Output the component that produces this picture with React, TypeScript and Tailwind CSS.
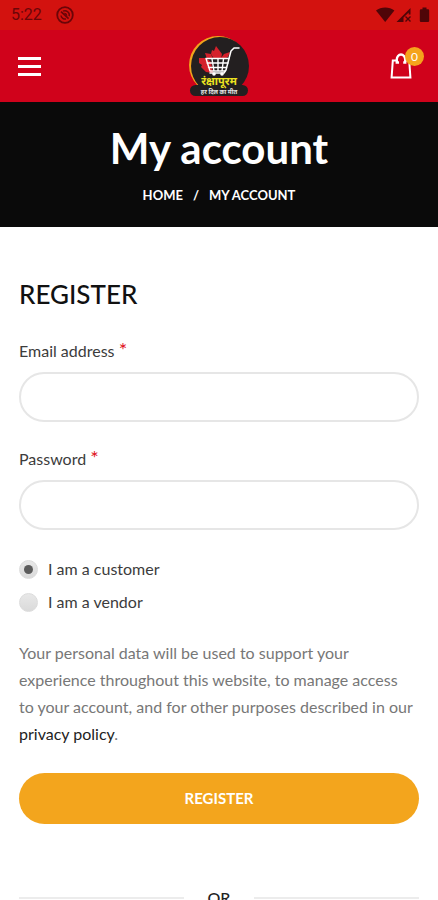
import { useState } from "react";

const roles = [
  { value: "customer", label: "I am a customer" },
  { value: "vendor", label: "I am a vendor" },
];

function StatusBar() {
  return (
    <div className="flex h-[30px] items-center justify-between bg-[#d3120f] pr-2 pl-[11px] text-[#6b0508]">
      <div className="flex items-center gap-[14px]">
        <span className="font-[Roboto,sans-serif] text-base">5:22</span>
        <svg className="size-[18px]" viewBox="0 0 18 18" fill="none" stroke="currentColor">
          <circle cx="9" cy="9" r="7.8" strokeWidth="1.8" />
          <path d="M5 9.500a4.200 4.200 0 0 0 5 3.500M7 5.200a4.400 4.400 0 0 1 6.200 5" strokeWidth="1.500" />
          <path d="M5 5.600l7.600 7" strokeWidth="1.700" />
          <path d="M8.500 7.300a2.300 2.300 0 0 1 2.400 2.300z" fill="currentColor" strokeWidth="1" />
        </svg>
      </div>
      <svg className="h-4 w-[54px] text-[#4f0508]" viewBox="0 0 54 16" fill="currentColor">
        <path d="M0 3.600C5-.6 13.400-.6 18.400 3.600L9.200 15z" />
        <path d="M20.500 15L34.500 1v6.500h-1.800V5.400L27.500 10.600V15z" />
        <path d="M29.500 9.500l5 5m0-5l-5 5" stroke="currentColor" strokeWidth="1.400" />
        <path d="M46.500.5h4v1.800h1.500a1.200 1.200 0 0 1 1.200 1.200v10.300a1.200 1.200 0 0 1-1.200 1.200h-7a1.200 1.200 0 0 1-1.200-1.200V3.500A1.200 1.200 0 0 1 45 2.300h1.500z" />
      </svg>
    </div>
  );
}

function Logo() {
  return (
    <svg className="h-[62px] w-[60px]" viewBox="0 0 60 62" role="img" aria-label="Store logo">
      <circle cx="29" cy="30" r="29" fill="#f0a41c" />
      <circle cx="31" cy="31" r="29" fill="#231f20" />
      <path d="M8 50l-4 2v5h8z" fill="#231f20" />
      <rect x="1" y="50" width="58" height="11" rx="5.500" fill="#231f20" />
      <g fill="#d4202b">
        <path d="M27 11l3 4 3 4-1 5h-7l-3-5 1-4 2 1z" />
        <path d="M10 23l7 0 5 4 2 11-7-1-5-5 1-2-3-2z" />
        <path d="M16 18l6 1 2 5h-6z" />
        <path d="M32 23l3-4 6-2-2 5-4 2z" />
      </g>
      <g fill="none" stroke="#fff" strokeLinecap="round" strokeLinejoin="round">
        <path d="M50 13h-5l-3 3-5 19-2 3H21" strokeWidth="1.500" />
        <path d="M17 23.500h23M18 28h21M19.500 32.500h18M17 23.500l4 12.500h15M23 24l2 12M29 24v12M34.500 24L33 36" strokeWidth="1.400" />
      </g>
      <circle cx="25" cy="39" r="1.800" fill="#fff" />
      <circle cx="33" cy="39" r="1.800" fill="#fff" />
      <text x="30" y="50" textAnchor="middle" fill="#ece320" className="font-['Noto_Sans',sans-serif] text-[11px] font-bold">
        रंक्षापूरम
      </text>
      <text x="30" y="59" textAnchor="middle" fill="#e8e8e8" className="font-['Noto_Sans',sans-serif] text-[6px] font-bold">
        हर दिल का मीत
      </text>
    </svg>
  );
}

function Header() {
  return (
    <header className="grid h-[72px] grid-cols-3 items-center bg-[#d0021b] px-[18px]">
      <button type="button" aria-label="Menu" className="flex w-[23px] flex-col gap-[5px] justify-self-start">
        <span className="h-[3px] bg-white" />
        <span className="h-[3px] bg-white" />
        <span className="h-[3px] bg-white" />
      </button>
      <a href="#home" className="justify-self-center">
        <Logo />
      </a>
      <a href="#cart" aria-label="Cart" className="relative mr-2 justify-self-end">
        <svg className="h-[26px] w-[22px]" viewBox="0 0 22 26" fill="none" stroke="#fff">
          <path d="M6 7.500H2.800L1.600 24.500h18.800L19.200 7.500H16" strokeWidth="2" />
          <path d="M9 9.500H6.800V6.500a4.200 5 0 0 1 8.400 0v3h-2" strokeWidth="2.400" />
        </svg>
        <span className="absolute -top-[6px] -right-3 flex size-[19px] items-center justify-center rounded-full bg-[#f5a31c] text-xs text-white">
          0
        </span>
      </a>
    </header>
  );
}

function PageTitle() {
  return (
    <div className="flex h-[125px] flex-col items-center bg-[#0a0a0a] pt-5 text-white">
      <h1 className="text-[42px] leading-[52px] font-bold">My account</h1>
      <nav className="mt-2 flex gap-[10px] text-[13px] leading-[26px] font-bold uppercase">
        <a href="#home">Home</a>
        <span>/</span>
        <span>My account</span>
      </nav>
    </div>
  );
}

function Field({ id, label, type }: { id: string; label: string; type: string }) {
  return (
    <div className="mb-6 flex flex-col gap-2">
      <label htmlFor={id} className="text-base leading-[26px] text-[#3c3c3c]">
        {label} <span className="text-xl leading-none text-[#e01020]">*</span>
      </label>
      <input
        id={id}
        name={id}
        type={type}
        className="h-[50px] w-full rounded-full border-2 border-[#e6e6e6] bg-white px-5 text-base outline-none focus:border-[#d0d0d0]"
      />
    </div>
  );
}

export default function App() {
  const [role, setRole] = useState("customer");

  return (
    <div className="bg-white font-[Lato,sans-serif]">
      <StatusBar />
      <Header />
      <PageTitle />

      <main className="px-[19px] pt-[49px]">
        <h2 className="mb-[26px] text-[26px] leading-9 font-medium text-[#111] uppercase">Register</h2>
        <form onSubmit={(e) => e.preventDefault()}>
          <Field id="email" label="Email address" type="email" />
          <Field id="password" label="Password" type="password" />

          <div className="flex flex-col gap-[7px] pt-[2px]">
            {roles.map((r) => (
              <label key={r.value} className="flex items-center gap-[10px] text-base leading-[26px] text-[#3c3c3c]">
                <input
                  type="radio"
                  name="role"
                  value={r.value}
                  checked={role === r.value}
                  onChange={() => setRole(r.value)}
                  className="grid size-[19px] appearance-none place-items-center rounded-full border border-[#dcdcdc] bg-linear-to-b from-[#e8e8e8] to-[#dadada] before:size-[9px] before:rounded-full checked:before:bg-[#5c5c5c]"
                />
                {r.label}
              </label>
            ))}
          </div>

          <p className="mt-6 pr-1 text-base leading-[27px] text-[#777]">
            Your personal data will be used to support your experience throughout this website, to manage access to
            your account, and for other purposes described in our{" "}
            <a href="#privacy" className="text-[#222]">
              privacy policy
            </a>
            .
          </p>

          <button
            type="submit"
            className="mt-[26px] h-[51px] w-full rounded-full bg-[#f3a51d] text-[15px] font-bold text-white uppercase"
          >
            Register
          </button>
        </form>

        <div className="mt-[62px] flex items-center gap-6 text-base leading-6 font-medium text-[#222]">
          <span className="h-[2px] flex-1 bg-[#ececec]" />
          OR
          <span className="h-[2px] flex-1 bg-[#ececec]" />
        </div>
      </main>
    </div>
  );
}
